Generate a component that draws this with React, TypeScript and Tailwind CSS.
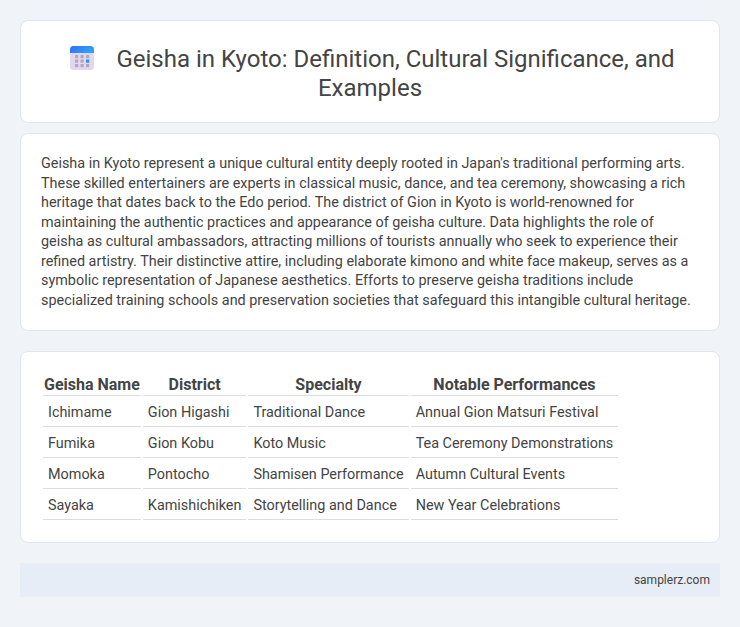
const rows = [
  ["Ichimame", "Gion Higashi", "Traditional Dance", "Annual Gion Matsuri Festival"],
  ["Fumika", "Gion Kobu", "Koto Music", "Tea Ceremony Demonstrations"],
  ["Momoka", "Pontocho", "Shamisen Performance", "Autumn Cultural Events"],
  ["Sayaka", "Kamishichiken", "Storytelling and Dance", "New Year Celebrations"],
];
const heads = ["Geisha Name", "District", "Specialty", "Notable Performances"];

function CalendarIcon() {
  return (
    <svg viewBox="0 0 24 24" className="inline-block w-6 h-6 ml-[5px] mr-[22px] align-[-3px]">
      <defs>
        <linearGradient id="cal-top" x1="0" y1="0" x2="1" y2="0.4">
          <stop offset="0" stopColor="#2f6ff0" />
          <stop offset="1" stopColor="#2fa0fa" />
        </linearGradient>
      </defs>
      <rect x="0" y="0" width="24" height="24" rx="3.5" fill="#e2d8ee" />
      <path d="M0 7V3.5A3.5 3.5 0 0 1 3.5 0h17A3.5 3.5 0 0 1 24 3.5V7z" fill="url(#cal-top)" />
      {[9, 13.5, 18].map((y) =>
        [5, 10.5, 16].map((x) => (
          <rect key={`${x}-${y}`} x={x} y={y} width="3.2" height="3.2" fill={x === 16 && y === 13.5 ? "#2f8cf5" : "#b3a7c2"} />
        ))
      )}
    </svg>
  );
}

export default function App() {
  return (
    <div className="min-h-[627px] bg-[#f0f4f8] p-5 font-['Roboto',sans-serif] text-[#444444]">
      <div className="bg-white border border-[#e0e6f0] rounded-lg px-5 pt-6 pb-[19px] mb-2.5">
        <h1 className="text-2xl font-normal leading-[29px] text-center text-[#444444]">
          <CalendarIcon />
          Geisha in Kyoto: Definition, Cultural Significance, and Examples
        </h1>
      </div>
      <div className="bg-white border border-[#e0e6f0] rounded-lg p-5 mb-5">
        <p className="text-[14.4px] leading-[19.5px]">
          Geisha in Kyoto represent a unique cultural entity deeply rooted in Japan's traditional performing arts. These skilled entertainers are experts in classical music, dance, and tea ceremony, showcasing a rich heritage that dates back to the Edo period. The district of Gion in Kyoto is world-renowned for maintaining the authentic practices and appearance of geisha culture. Data highlights the role of geisha as cultural ambassadors, attracting millions of tourists annually who seek to experience their refined artistry. Their distinctive attire, including elaborate kimono and white face makeup, serves as a symbolic representation of Japanese aesthetics. Efforts to preserve geisha traditions include specialized training schools and preservation societies that safeguard this intangible cultural heritage.
        </p>
      </div>
      <div className="bg-white border border-[#e0e6f0] rounded-lg p-5 mb-5">
        <table className="border-separate border-spacing-[2px] text-[14.4px]">
          <thead>
            <tr>
              {heads.map((h) => (
                <th key={h} className="text-base font-bold border-b border-[#dddddd] leading-[21px] px-px py-0 text-center">{h}</th>
              ))}
            </tr>
          </thead>
          <tbody>
            {rows.map((r) => (
              <tr key={r[0]}>
                {r.map((c) => (
                  <td key={c} className="border-b border-[#dddddd] px-[5px] pt-[6px] pb-[4px] leading-[18px]">{c}</td>
                ))}
              </tr>
            ))}
          </tbody>
        </table>
      </div>
      <div className="bg-[#e6edf7] px-2.5 py-[9px] text-right text-xs leading-4">
        samplerz.com
      </div>
    </div>
  );
}
